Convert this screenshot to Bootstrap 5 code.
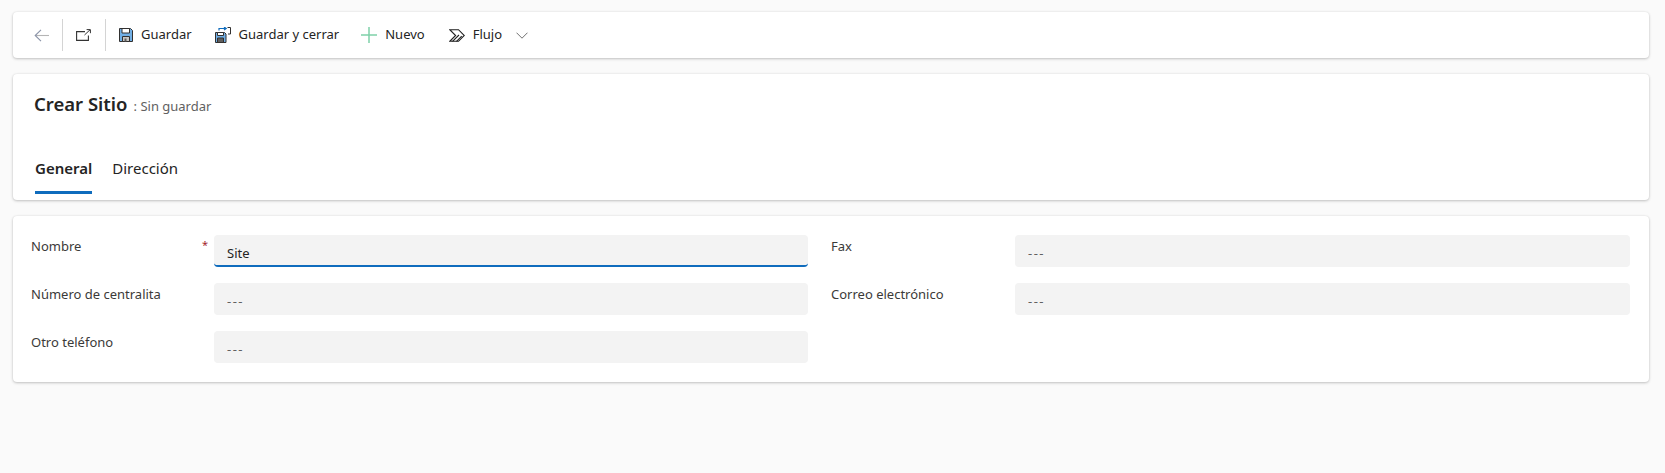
<!DOCTYPE html>
<html lang="es">
<head>
<meta charset="utf-8">
<title>Crear Sitio</title>
<link href="https://cdn.jsdelivr.net/npm/bootstrap@5.3.0/dist/css/bootstrap.min.css" rel="stylesheet">
<style>
body{background:#fafafa;font-family:"Noto Sans","Open Sans","Liberation Sans",sans-serif;color:#242424;padding:12px 16px 0 13px;font-size:13px}
.panel{border:0;border-radius:4px;background:#fff;box-shadow:0 1px 3px rgba(0,0,0,.22),0 0 2px rgba(0,0,0,.08);margin-bottom:16px}
.cmdbar{height:46px;padding:7px 0 0 21px;align-items:flex-start}
.cmdsep{width:1px;height:32px;background:#d4d4d4}
.cmd{border:0;background:none;padding:0;height:32px;display:flex;align-items:center;color:#242424;font-size:13px;white-space:nowrap}
.cmd svg{display:block;flex:none}
.cmd-back{width:28px}
.cmd-open{width:42px;padding-left:13px}
.cmd-first{margin-left:13px}
.cmd-save2{margin-left:23px}
.cmd-new{margin-left:22px}
.cmd-flow{margin-left:24px}
.chev{margin-left:14px}
.title-wrap{padding:17px 21px 0;height:77px;display:flex;align-items:baseline}
.page-title{font-size:18.5px;font-weight:600;margin:0;line-height:26px}
.unsaved{font-size:13px;color:#616161;margin-left:6px}
.tabstrip{padding-left:22px;gap:20px}
.tabstrip .nav-link{padding:0;height:43px;line-height:34px;color:#242424;font-size:15px;border-bottom:3px solid transparent;border-radius:0}
.tabstrip .nav-link.active{font-weight:600;border-bottom-color:#0f6cbd}
.titlecard{height:126px}
.fields{display:grid;grid-template-columns:777fr 799fr;column-gap:23px;row-gap:16px;padding:19px 19px 19px 18px}
.field{display:grid;grid-template-columns:184px 1fr}
.field:nth-child(odd){grid-template-columns:183px 1fr}
.field-label{position:relative;line-height:20px;padding-top:1px;color:#3b3a39}
.req{position:absolute;right:6px;top:0;color:#a4262c;font-size:11px}
.form-control.fieldbox{height:32px;border:0;border-radius:4px;background:#f3f3f3;padding:3px 13px 0;font-size:13px;color:#242424;box-shadow:none}
.form-control.fieldbox::placeholder{color:#616161;opacity:1;letter-spacing:1.5px}
.form-control.fieldbox.current{border-bottom:2px solid #0f6cbd;padding-top:5px}
</style>
</head>
<body>
<div class="card panel">
  <div class="cmdbar d-flex">
    <button class="cmd cmd-back" aria-label="Atrás"><svg width="15" height="13" viewBox="0 0 15 13" fill="none" stroke-width="1.1"><path d="M2 6.500h13" stroke="#b5b5b5"/><path d="M7 .8 1.200 6.500 7 12.200" stroke="#8a93a8"/></svg></button>
    <div class="cmdsep"></div>
    <button class="cmd cmd-open" aria-label="Abrir"><svg width="15" height="12" viewBox="0 0 15 12" fill="none" stroke="#333" stroke-width="1.1"><path d="M9 2.600H.6v8.800h11.800V6.500"/><path d="M8.500 6 14 .8M10.600.6h3.800v3.600" stroke-width="1"/></svg></button>
    <div class="cmdsep"></div>
    <button class="cmd cmd-first"><svg width="14" height="14" viewBox="0 0 14 14"><path d="M.5.500h11l2 2v11H.5z" fill="#71afe5" stroke="#323130"/><path d="M3 .5h7.500v4.500H3z" fill="#fff" stroke="#323130"/><path d="M3.500 8.500h7v5h-7z" fill="#c8c6c4" stroke="#323130"/><path d="M5.500 10.500h2v3h-2z" fill="#605e5c"/></svg><span class="ms-2">Guardar</span></button>
    <button class="cmd cmd-save2"><svg width="16" height="16" viewBox="0 0 16 16"><path d="M.5 5.500h9l1.500 1.500v8.500H.5z" fill="#71afe5" stroke="#323130"/><path d="M2.500 5.500h6v3h-6z" fill="#fff" stroke="#323130"/><path d="M2.500 11h6v4.500h-6z" fill="#605e5c" stroke="#323130"/><path d="M4 3.500v-2h7M9 0l2.200 1.500L9 3" fill="none" stroke="#0f6cbd" stroke-width="1.2"/><path d="M12.500.5h3V7h-2.500" fill="none" stroke="#323130"/></svg><span class="ms-2">Guardar y cerrar</span></button>
    <button class="cmd cmd-new"><svg width="16" height="16" viewBox="0 0 16 16" stroke="#7fd1a9" stroke-width="1.5"><path d="M8 0v16M0 8h16"/></svg><span class="ms-2">Nuevo</span></button>
    <button class="cmd cmd-flow"><svg width="16" height="13" viewBox="0 0 16 13" fill="none" stroke="#1f1f1f" stroke-width="1.1"><path d="M.8.7h8.700l5.800 5.800-5.800 5.800H.8l5.800-5.800z"/><path d="M3.500 12.300 10 6M7.500 12.300l5.200-5.200"/></svg><span class="ms-2">Flujo</span><svg class="chev" width="12" height="7" viewBox="0 0 12 7" fill="none" stroke="#717171"><path d="m.5.700 5.500 5.500L11.500.7"/></svg></button>
  </div>
</div>
<div class="card panel titlecard">
  <div class="title-wrap">
    <h1 class="page-title">Crear Sitio</h1>
    <span class="unsaved">: Sin guardar</span>
  </div>
  <ul class="nav tabstrip">
    <li class="nav-item"><a class="nav-link active" href="#">General</a></li>
    <li class="nav-item"><a class="nav-link" href="#">Dirección</a></li>
  </ul>
</div>
<div class="card panel">
  <div class="fields">
    <div class="field"><label class="field-label">Nombre<span class="req">*</span></label><input class="form-control fieldbox current" value="Site"></div>
    <div class="field"><label class="field-label">Fax</label><input class="form-control fieldbox" placeholder="---"></div>
    <div class="field"><label class="field-label">Número de centralita</label><input class="form-control fieldbox" placeholder="---"></div>
    <div class="field"><label class="field-label">Correo electrónico</label><input class="form-control fieldbox" placeholder="---"></div>
    <div class="field"><label class="field-label">Otro teléfono</label><input class="form-control fieldbox" placeholder="---"></div>
  </div>
</div>
<script src="https://cdn.jsdelivr.net/npm/bootstrap@5.3.0/dist/js/bootstrap.bundle.min.js"></script>
</body>
</html>
